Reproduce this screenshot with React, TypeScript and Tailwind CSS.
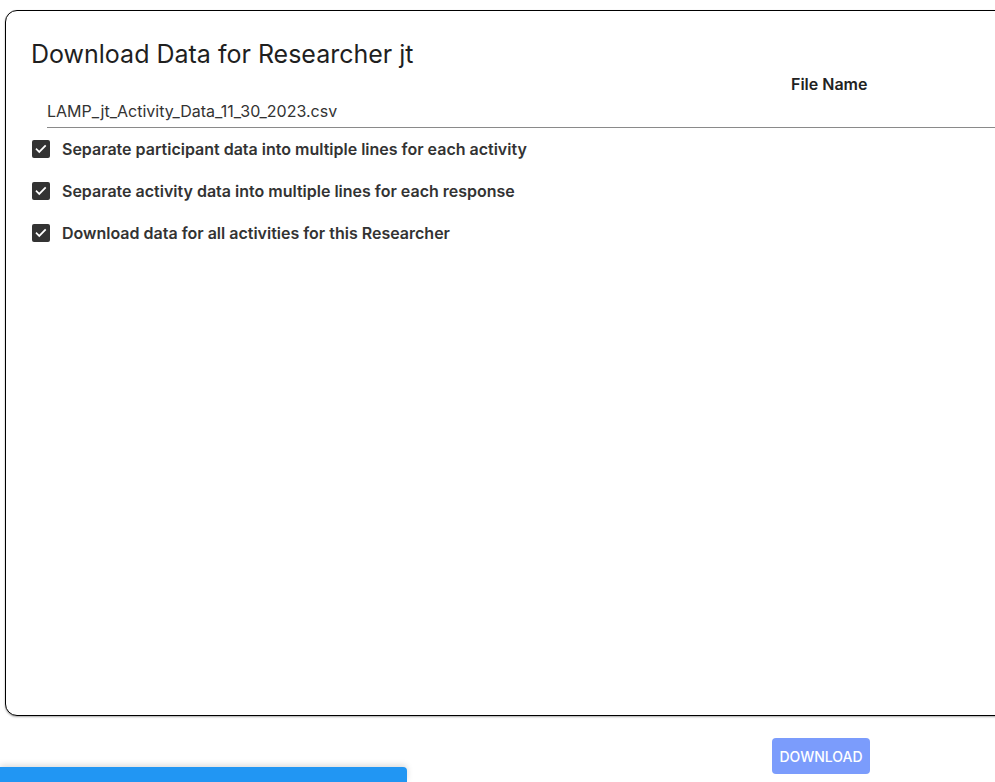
import React from "react";

const options = [
  "Separate participant data into multiple lines for each activity",
  "Separate activity data into multiple lines for each response",
  "Download data for all activities for this Researcher",
];

function CheckIcon() {
  return (
    <span className="w-[18px] h-[18px] rounded-[2px] bg-[#333333] flex items-center justify-center shrink-0">
      <svg width="14" height="14" viewBox="0 0 24 24" fill="none">
        <path d="M4.5 12.5l4.5 4.5 10-10" stroke="white" strokeWidth="3" strokeLinecap="square" />
      </svg>
    </span>
  );
}

export default function App() {
  return (
    <div className="w-[995px] h-[782px] overflow-hidden relative bg-white font-['Inter','Noto_Sans',sans-serif] text-[#222]">
      <div className="pl-[5px] pt-[10px]">
        <div className="w-[1100px] h-[706px] border border-black rounded-[12px] bg-white shadow-[0_1px_2px_rgba(0,0,0,0.35)] pt-[27px]">
          <h2 className="ml-[25px] text-[25px] leading-[32px] font-normal text-[#1f1f1f]">
            Download Data for Researcher jt
          </h2>
          <div className="mt-[2px] pl-[785px] text-[16px] leading-[24px] font-semibold text-[#222]">
            File Name
          </div>
          <div className="ml-[41px] pt-[3px] pb-[4px] border-b border-[#8a8a8a] text-[16px] leading-[24px] text-[#333]">
            LAMP_jt_Activity_Data_11_30_2023.csv
          </div>
          <div className="flex flex-col">
            {options.map((o) => (
              <label key={o} className="h-[42px] flex items-center gap-[12px] pl-[26px]">
                <CheckIcon />
                <span className="text-[16px] font-semibold text-[#333]">{o}</span>
              </label>
            ))}
          </div>
        </div>
      </div>
      <div className="mt-[22px] pl-[772px]">
        <button className="w-[98px] h-[36px] rounded-[4px] bg-[#7b9cfc] text-white text-[14px] font-medium uppercase">
          Download
        </button>
      </div>
      <div className="absolute left-0 bottom-0 w-[407px] h-[15px] bg-[#2196f3] rounded-tr-[4px] shadow-[0_-2px_6px_rgba(0,0,0,0.15)]" />
    </div>
  );
}
